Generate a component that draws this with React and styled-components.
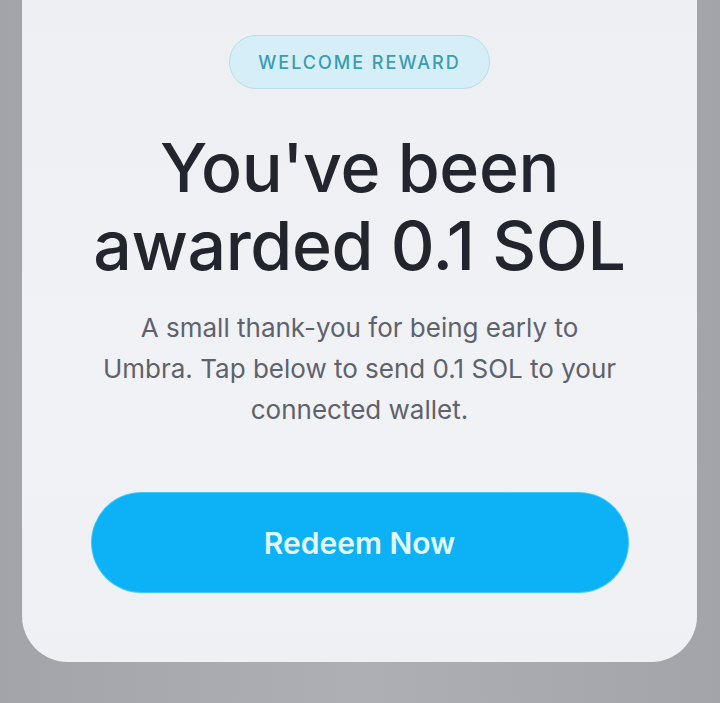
import React from "react";
import styled, { createGlobalStyle } from "styled-components";

const Global = createGlobalStyle`
  html, body {
    margin: 0;
    padding: 0;
    background: #a9aaaf;
  }
  body {
    font-family: Inter, "Noto Sans", sans-serif;
    -webkit-font-smoothing: antialiased;
  }
`;

const Page = styled.div`
  width: 720px;
  height: 703px;
  overflow: hidden;
  background: linear-gradient(to right, #a3a4a9 0%, #aeafb4 50%, #a3a4a9 100%);
  padding: 0 23px 0 22px;
  box-sizing: border-box;
`;

const Card = styled.div`
  height: 662px;
  box-sizing: border-box;
  background: linear-gradient(to bottom, #edeff3 0%, #f1f2f5 60%, #eef0f4 100%);
  border-radius: 0 0 46px 46px;
  display: flex;
  flex-direction: column;
  align-items: center;
  padding: 35px 40px 0;
`;

const Badge = styled.div`
  height: 54px;
  box-sizing: border-box;
  padding: 0 28px;
  display: flex;
  align-items: center;
  border-radius: 27px;
  background: #d6eef8;
  border: 1.5px solid #b9dde9;
  color: #3a9db0;
  font-size: 18px;
  font-weight: 500;
  letter-spacing: 2px;
`;

const Title = styled.h1`
  margin: 39px 0 0;
  font-size: 68px;
  line-height: 78px;
  font-weight: 500;
  color: #22252d;
  text-align: center;
  letter-spacing: -0.4px;
`;

const Text = styled.p`
  margin: 23px 0 0;
  max-width: 531px;
  font-size: 26px;
  line-height: 41px;
  color: #5e626c;
  text-align: center;
`;

const Button = styled.button`
  margin-top: 63px;
  width: 536px;
  height: 99px;
  flex-shrink: 0;
  border: none;
  border-radius: 50px;
  background: #0cb1f6;
  box-shadow: 0 0 0 1px #3fcaf9;
  color: #e2f9ff;
  font-family: Inter, "Noto Sans", sans-serif;
  font-size: 30px;
  font-weight: 600;
  cursor: pointer;
`;

export default function App() {
  return (
    <Page>
      <Global />
      <Card>
        <Badge>WELCOME REWARD</Badge>
        <Title>
          You've been
          <br />
          awarded 0.1 SOL
        </Title>
        <Text>
          A small thank-you for being early to Umbra. Tap below to send 0.1 SOL
          to your connected wallet.
        </Text>
        <Button>Redeem Now</Button>
      </Card>
    </Page>
  );
}
